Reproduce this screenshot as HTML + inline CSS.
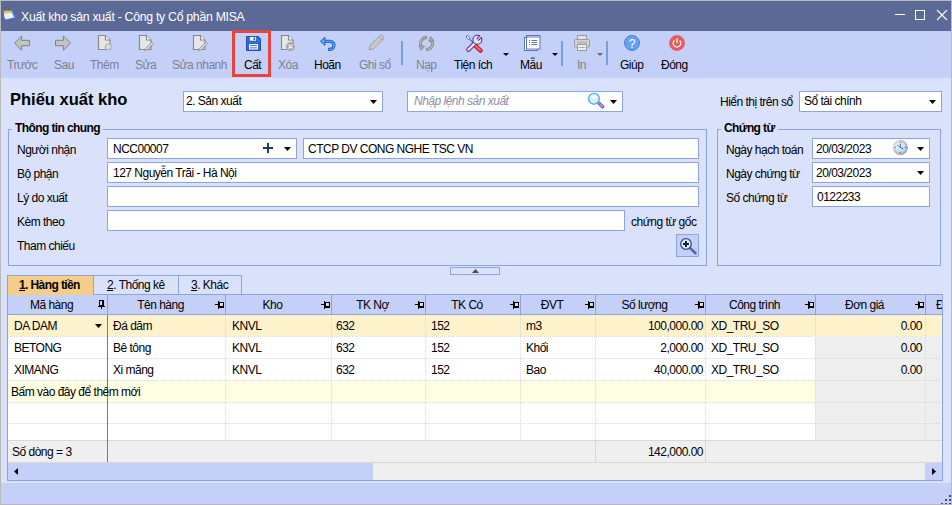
<!DOCTYPE html>
<html><head><meta charset="utf-8">
<style>
*{margin:0;padding:0;box-sizing:border-box}
html,body{width:952px;height:505px;overflow:hidden;background:#b9b9b9;font-family:"Liberation Sans",sans-serif;font-size:11px;color:#000}
.a{position:absolute}
.t{position:absolute;white-space:nowrap;line-height:11px;font-size:12px;letter-spacing:-0.5px;margin-top:1px}
.lbl{color:#000}
.dis{color:#7d8194}
.box{position:absolute;background:#fff;border:1px solid #8fa3df}
.grp{position:absolute;border:1px solid #8fa3df}
.arr{position:absolute;width:0;height:0;border-left:3.5px solid transparent;border-right:3.5px solid transparent;border-top:4px solid #000}
.sarr{position:absolute;width:0;height:0;border-left:3px solid transparent;border-right:3px solid transparent;border-top:3px solid #000}
.vs{position:absolute;width:1px;background:#8fa3df}
.dh{left:8px;width:934px;height:1px;background-image:linear-gradient(90deg,#d9d9d9 1px,transparent 1px);background-size:2px 1px}
.dv{top:315px;width:1px;height:125px;background-image:linear-gradient(180deg,#d9d9d9 1px,transparent 1px);background-size:1px 2px}
.hd{position:absolute;top:296px;height:19px;line-height:19px;text-align:center;font-size:12px;letter-spacing:-0.5px;white-space:nowrap;overflow:hidden}
</style></head><body>
<div class="a" style="left:1px;top:1px;width:950px;height:503px;background:#dae1fa"></div>
<!-- title bar -->
<div class="a" style="left:1px;top:1px;width:950px;height:30px;background:#5b6996"></div>
<svg class="a" style="left:0px;top:4px" width="18" height="20" viewBox="0 4 18 20">
 <path d="M2.4 9.8 L11.8 9.4 L15.4 17.6 L5.4 21.8 L2.6 18.2 Z" fill="#5a5fe0"/>
 <path d="M2.4 9.8 L11.8 9.4 L15.4 17.6 L14 18.2 L10.8 10.8 L3.6 11.2 Z" fill="#4aa0f0"/>
 <path d="M3.8 11.2 L10.8 10.8 L14 17.4 L5.6 19.6 L4.4 17.4 Z" fill="#eaf4ff"/>
 <path d="M3.8 11.2 L10.8 10.8 L11.8 13 L4.2 13.8 Z" fill="#f3c33c"/>
 <path d="M4.6 11.5 Q4 7.3 5.6 7.5 Q6.6 7.8 6.2 11 M8.4 11 Q8 7.2 9.6 7.3 Q10.6 7.6 10.2 10.8" stroke="#5a5a6a" stroke-width="0.8" fill="none"/>
</svg>
<div class="t" style="left:21px;top:10px;color:#fff;font-size:12.3px;letter-spacing:-0.29px;line-height:12px">Xuất kho sản xuất - Công ty Cổ phần MISA</div>
<div class="a" style="left:895px;top:14px;width:10px;height:1px;background:#fff"></div>
<div class="a" style="left:915px;top:10px;width:10px;height:10px;border:1px solid #fff"></div>
<svg class="a" style="left:936px;top:9px" width="12" height="12" viewBox="0 0 12 12"><path d="M1 1 L11 11 M11 1 L1 11" stroke="#fff" stroke-width="1.1"/></svg>

<!-- toolbar -->
<div class="a" style="left:1px;top:31px;width:950px;height:47px;background:#c4d0f7"></div>
<!-- icons -->
<svg class="a" style="left:14px;top:35px" width="17" height="17" viewBox="0 0 17 17"><path d="M0.7 8 L7.6 0.9 L7.6 5.3 L15.6 5.3 L15.6 10.7 L7.6 10.7 L7.6 15.2 Z" fill="#c3c3c3" stroke="#818181" stroke-width="1"/></svg>
<svg class="a" style="left:55px;top:35px" width="17" height="17" viewBox="0 0 17 17"><path d="M15.5 8 L8.4 0.9 L8.4 5.3 L0.5 5.3 L0.5 10.7 L8.4 10.7 L8.4 15.2 Z" fill="#c3c3c3" stroke="#818181" stroke-width="1"/></svg>
<svg class="a" style="left:97px;top:34px" width="17" height="17" viewBox="0 0 17 17"><path d="M1.5 1.5 H8.5 L13 6 V15.5 H1.5 Z" fill="#e6e6e6" stroke="#8a8a8a" stroke-width="1.2"/><path d="M8.5 1.5 V6 H13" fill="#fafafa" stroke="#8a8a8a" stroke-width="1.2"/><circle cx="11.3" cy="12.8" r="3.1" fill="#dadada" stroke="#ababab" stroke-width="1"/></svg>
<svg class="a" style="left:138px;top:34px" width="18" height="18" viewBox="0 0 18 18"><path d="M1.5 1.5 H8.5 L13 6 V15.5 H1.5 Z" fill="#e6e6e6" stroke="#8a8a8a" stroke-width="1.2"/><path d="M8.5 1.5 V6 H13" fill="#fafafa" stroke="#8a8a8a" stroke-width="1.2"/><path d="M6.8 16.8 L7.4 14.5 L13.8 8.1 L15.4 9.7 L9 16.1 Z" fill="#d8d8d8" stroke="#8c8c8c" stroke-width="0.8"/></svg>
<svg class="a" style="left:192px;top:34px" width="18" height="18" viewBox="0 0 18 18"><path d="M1.5 1.5 H8.5 L13 6 V15.5 H1.5 Z" fill="#e6e6e6" stroke="#8a8a8a" stroke-width="1.2"/><path d="M8.5 1.5 V6 H13" fill="#fafafa" stroke="#8a8a8a" stroke-width="1.2"/><path d="M6.8 16.8 L7.4 14.5 L13.8 8.1 L15.4 9.7 L9 16.1 Z" fill="#d8d8d8" stroke="#8c8c8c" stroke-width="0.8"/></svg>
<!-- save -->
<div class="a" style="left:232px;top:30px;width:39px;height:47px;border:3px solid #e8433c"></div>
<svg class="a" style="left:246px;top:36px" width="15" height="15" viewBox="0 0 15 15"><path d="M0.5 0.5 H12.3 L14.5 2.7 V14.5 H0.5 Z" fill="#2f6fd8" stroke="#1c4cb4" stroke-width="1"/><rect x="3.3" y="0.5" width="7.4" height="4.6" fill="#fff" stroke="#1c4cb4" stroke-width="0.8"/><rect x="7.4" y="1.4" width="1.8" height="2.6" fill="#2f6fd8"/><rect x="2.4" y="7.4" width="10.2" height="6.6" fill="#fff" stroke="#1c4cb4" stroke-width="0.8"/><path d="M4 9.6 H11 M4 11.9 H11" stroke="#2f6fd8" stroke-width="1"/></svg>
<svg class="a" style="left:280px;top:34px" width="17" height="17" viewBox="0 0 17 17"><path d="M1.5 1.5 H8.5 L13 6 V15.5 H1.5 Z" fill="#e6e6e6" stroke="#8a8a8a" stroke-width="1.2"/><path d="M8.5 1.5 V6 H13" fill="#fafafa" stroke="#8a8a8a" stroke-width="1.2"/><circle cx="10.4" cy="12.6" r="4.5" fill="#a9a9a9"/><path d="M8.5 10.7 L12.3 14.5 M12.3 10.7 L8.5 14.5" stroke="#f4f4f4" stroke-width="1.1"/></svg>
<svg class="a" style="left:318px;top:34px" width="18" height="18" viewBox="0 0 18 18"><path d="M6 7.3 H12 A4 4 0 0 1 12 15.3 H10" fill="none" stroke="#1f64d0" stroke-width="3.2"/><path d="M6 7.3 H12 A4 4 0 0 1 12 15.3 H10.7" fill="none" stroke="#62a8f4" stroke-width="1.3"/><path d="M2.4 7.3 L7 3.2 L7 11.4 Z" fill="#62a8f4" stroke="#1f64d0" stroke-width="1"/></svg>
<svg class="a" style="left:368px;top:34px" width="17" height="17" viewBox="0 0 17 17"><path d="M1 16 L2.5 11 L12 1.5 Q13.5 0.5 15 2 Q16.5 3.5 15.5 5 L6 14.5 Z" fill="#c9c9c9" stroke="#9a9a9a" stroke-width="0.9"/><path d="M11 3 L14 6" stroke="#9a9a9a" stroke-width="0.9"/></svg>
<div class="a" style="left:401px;top:41px;width:2px;height:24px;background:#76a0d8"></div>
<svg class="a" style="left:416px;top:32px" width="21" height="22" viewBox="0 0 21 22"><g fill="none"><path d="M10.5 5.5 A6 6 0 0 0 5.8 15.2" stroke="#8a8a8a" stroke-width="3"/><path d="M10.5 17.5 A6 6 0 0 0 15.2 7.8" stroke="#8a8a8a" stroke-width="3"/><path d="M10.5 5.5 A6 6 0 0 0 5.8 15.2" stroke="#b8b8b8" stroke-width="1.2"/><path d="M10.5 17.5 A6 6 0 0 0 15.2 7.8" stroke="#b8b8b8" stroke-width="1.2"/></g><path d="M3 13.6 L8.6 14.2 L5 18.6 Z" fill="#a8a8a8" stroke="#8a8a8a" stroke-width="0.8"/><path d="M12.6 9.4 L18 9 L14.6 4.6 Z" fill="#a8a8a8" stroke="#8a8a8a" stroke-width="0.8"/><path d="M10.5 4 V7 M10.5 16 V19" stroke="#8a8a8a" stroke-width="1"/></svg>
<svg class="a" style="left:462px;top:32px" width="24" height="22" viewBox="0 0 24 22">
 <path d="M13.2 13.6 L18.6 18.6" stroke="#b82020" stroke-width="4.4" stroke-linecap="round"/>
 <path d="M13.4 13.8 L18.4 18.4" stroke="#ea6a6a" stroke-width="2.2" stroke-linecap="round"/>
 <path d="M8 7.6 L12.6 12.2" stroke="#4a68c0" stroke-width="1.1"/>
 <ellipse cx="6.2" cy="5.6" rx="1.3" ry="2.4" transform="rotate(-45 6.2 5.6)" fill="#e6eeff" stroke="#4a68c0" stroke-width="0.9"/>
 <path d="M13.2 10.8 L6.4 17.6" stroke="#5a2c8a" stroke-width="4.4" stroke-linecap="round"/>
 <path d="M13.2 10.8 L6.4 17.6" stroke="#ebdff8" stroke-width="2.4" stroke-linecap="round"/>
 <circle cx="15.4" cy="7.8" r="4.5" fill="#ebdff8" stroke="#5a2c8a" stroke-width="1.1"/>
 <path d="M15.4 7.8 L18.6 4.6" stroke="#5a2c8a" stroke-width="3.4"/>
 <path d="M15.9 7.3 L21 2.2" stroke="#c4d0f7" stroke-width="1.4" stroke-linecap="round"/>
</svg>
<div class="sarr" style="left:503px;top:53px"></div>
<svg class="a" style="left:524px;top:35px" width="17" height="16" viewBox="0 0 17 16"><rect x="0.5" y="2.5" width="13" height="13" fill="#fff" stroke="#5a72b8"/><rect x="2.5" y="0.5" width="13.5" height="13.5" fill="#fff" stroke="#5a72b8"/><path d="M3 2 H15.5" stroke="#5a72b8" stroke-width="1"/><path d="M5 5.5 H6 M7.5 5.5 H13 M5 7.5 H6 M7.5 7.5 H13 M5 9.5 H6 M7.5 9.5 H13" stroke="#5a72b8" stroke-width="1"/></svg>
<div class="sarr" style="left:552px;top:53px"></div>
<div class="a" style="left:561px;top:41px;width:2px;height:25px;background:#76a0d8"></div>
<svg class="a" style="left:574px;top:35px" width="16" height="16" viewBox="0 0 16 16"><rect x="3.5" y="0.5" width="9" height="7" fill="#e2e2e2" stroke="#9c9c9c"/><rect x="0.5" y="4.5" width="15" height="7.5" rx="1" fill="#d2d2d2" stroke="#9c9c9c"/><rect x="3" y="6.5" width="10" height="2" fill="#b8b8b8"/><rect x="3.5" y="9.5" width="9" height="6" fill="#eeeeee" stroke="#9c9c9c"/><path d="M5 12.5 H11" stroke="#aaa"/></svg>
<div class="sarr" style="left:597px;top:53px;border-top-color:#6a6a6a"></div>
<div class="a" style="left:606px;top:41px;width:2px;height:24px;background:#76a0d8"></div>
<svg class="a" style="left:624px;top:35px" width="16" height="16" viewBox="0 0 16 16"><circle cx="8" cy="8" r="7.5" fill="#62a4f2" stroke="#3b7bd8" stroke-width="0.9"/><text x="8" y="12.5" font-family="Liberation Sans" font-size="12" fill="#fff" text-anchor="middle">?</text></svg>
<svg class="a" style="left:669px;top:35px" width="16" height="16" viewBox="0 0 16 16"><circle cx="8" cy="8" r="7.5" fill="#ea5c5c" stroke="#d44" stroke-width="0.6"/><path d="M5.3 5.5 A3.8 3.8 0 1 0 10.7 5.5" fill="none" stroke="#fff" stroke-width="1.3"/><path d="M8 3.5 V8" stroke="#fff" stroke-width="1.3"/></svg>
<!-- toolbar labels -->
<div class="t dis" style="left:7px;top:59px">Trước</div>
<div class="t dis" style="left:54px;top:59px">Sau</div>
<div class="t dis" style="left:90px;top:59px">Thêm</div>
<div class="t dis" style="left:135px;top:59px">Sửa</div>
<div class="t dis" style="left:172px;top:59px">Sửa nhanh</div>
<div class="t" style="left:244px;top:59px">Cất</div>
<div class="t dis" style="left:278px;top:59px">Xóa</div>
<div class="t" style="left:314px;top:59px">Hoãn</div>
<div class="t dis" style="left:359px;top:59px">Ghi sổ</div>
<div class="t dis" style="left:416px;top:59px">Nạp</div>
<div class="t" style="left:454px;top:59px">Tiện ích</div>
<div class="t" style="left:520px;top:59px">Mẫu</div>
<div class="t dis" style="left:577px;top:59px">In</div>
<div class="t" style="left:620px;top:59px">Giúp</div>
<div class="t" style="left:661px;top:59px">Đóng</div>

<!-- header row of form -->
<div class="t" style="left:10px;top:90px;font-size:16.5px;line-height:16px;font-weight:bold;letter-spacing:0">Phiếu xuất kho</div>
<div class="box" style="left:183px;top:91px;width:200px;height:21px"></div>
<div class="t" style="left:186px;top:95px">2. Sản xuất</div>
<svg class="a" style="left:370px;top:100px" width="7" height="4"><path d="M0 0H7L3.5 4Z"/></svg>
<div class="box" style="left:407px;top:91px;width:216px;height:21px"></div>
<div class="t" style="left:414px;top:95px;font-style:italic;color:#8a8fa6">Nhập lệnh sản xuất</div>
<svg class="a" style="left:588px;top:92px" width="17" height="17" viewBox="0 0 17 17"><path d="M11 11.2 L14.6 14.8" stroke="#6f62d2" stroke-width="3.4" stroke-linecap="round"/><path d="M11.2 11.4 L14.4 14.6" stroke="#b4a8ee" stroke-width="1.3" stroke-linecap="round"/><circle cx="6" cy="6.8" r="5.4" fill="#d6eefa" stroke="#62abe8" stroke-width="1.4"/><ellipse cx="6" cy="5" rx="3.5" ry="1.8" fill="#f2fbff"/></svg>
<svg class="a" style="left:610px;top:100px" width="7" height="4"><path d="M0 0H7L3.5 4Z"/></svg>
<div class="t" style="left:720px;top:96px">Hiển thị trên sổ</div>
<div class="box" style="left:799px;top:91px;width:143px;height:21px"></div>
<div class="t" style="left:804px;top:95px">Sổ tài chính</div>
<svg class="a" style="left:929px;top:100px" width="7" height="4"><path d="M0 0H7L3.5 4Z"/></svg>

<!-- group 1 -->
<div class="grp" style="left:8px;top:129px;width:699px;height:137px"></div>
<div class="t" style="left:12px;top:122px;padding:0 3px;background:#dae1fa;font-weight:bold;letter-spacing:-0.6px">Thông tin chung</div>
<div class="t" style="left:17px;top:144px">Người nhận</div>
<div class="t" style="left:17px;top:168px">Bộ phận</div>
<div class="t" style="left:17px;top:192px">Lý do xuất</div>
<div class="t" style="left:17px;top:216px">Kèm theo</div>
<div class="t" style="left:17px;top:240px">Tham chiếu</div>
<div class="box" style="left:107px;top:138px;width:190px;height:21px"></div>
<div class="t" style="left:113px;top:143px">NCC00007</div>
<svg class="a" style="left:263px;top:143px" width="11" height="11" viewBox="0 0 11 11"><path d="M5 0 V10 M0 5 H10" stroke="#273766" stroke-width="2"/></svg>
<svg class="a" style="left:284px;top:147px" width="7" height="4"><path d="M0 0H7L3.5 4Z"/></svg>
<div class="box" style="left:303px;top:138px;width:396px;height:21px"></div>
<div class="t" style="left:308px;top:143px">CTCP DV CONG NGHE TSC VN</div>
<div class="box" style="left:107px;top:162px;width:592px;height:21px"></div>
<div class="t" style="left:113px;top:167px">127 Nguyễn Trãi - Hà Nội</div>
<div class="box" style="left:107px;top:186px;width:592px;height:21px"></div>
<div class="box" style="left:107px;top:210px;width:518px;height:21px"></div>
<div class="t" style="left:631px;top:216px">chứng từ gốc</div>
<div class="a" style="left:676px;top:234px;width:23px;height:23px;background:#c4d0f7;border:1px solid #8fa3df"></div>
<svg class="a" style="left:678px;top:236px" width="20" height="20" viewBox="0 0 20 20"><path d="M11.8 11.8 L17.5 17.3" stroke="#5868a8" stroke-width="2.6" stroke-linecap="round"/><circle cx="8" cy="8" r="5.3" fill="#d9f1ff" stroke="#3d4a86" stroke-width="1.3"/><path d="M8 5 V11 M5 8 H11" stroke="#1e2436" stroke-width="2"/></svg>

<!-- group 2 -->
<div class="grp" style="left:717px;top:129px;width:224px;height:137px"></div>
<div class="t" style="left:721px;top:122px;padding:0 3px;background:#dae1fa;font-weight:bold;letter-spacing:-0.6px">Chứng từ</div>
<div class="t" style="left:726px;top:144px">Ngày hạch toán</div>
<div class="t" style="left:726px;top:168px">Ngày chứng từ</div>
<div class="t" style="left:726px;top:192px">Số chứng từ</div>
<div class="box" style="left:812px;top:138px;width:118px;height:21px"></div>
<div class="t" style="left:816px;top:143px">20/03/2023</div>
<svg class="a" style="left:892px;top:139px" width="17" height="17" viewBox="0 0 17 17"><defs><linearGradient id="rim" x1="0" y1="0" x2="1" y2="1"><stop offset="0" stop-color="#e8e8e8"/><stop offset="1" stop-color="#8c8c8c"/></linearGradient><radialGradient id="face" cx="0.4" cy="0.35" r="0.7"><stop offset="0" stop-color="#f2fbff"/><stop offset="1" stop-color="#9fd0f0"/></radialGradient></defs><circle cx="8.3" cy="8.4" r="7.6" fill="url(#rim)"/><circle cx="8.3" cy="8.4" r="6" fill="url(#face)"/><g fill="#e04040"><circle cx="8.3" cy="3.4" r="0.6"/><circle cx="13.3" cy="8.4" r="0.6"/><circle cx="8.3" cy="13.4" r="0.6"/><circle cx="3.3" cy="8.4" r="0.6"/></g><path d="M8.3 4.8 V8.4 L11.2 9.8" stroke="#3a4a6a" stroke-width="0.9" fill="none"/><path d="M5 6 L8.3 8.4" stroke="#3a4a6a" stroke-width="0.7"/></svg>
<svg class="a" style="left:917px;top:147px" width="7" height="4"><path d="M0 0H7L3.5 4Z"/></svg>
<div class="box" style="left:812px;top:162px;width:118px;height:21px"></div>
<div class="t" style="left:816px;top:167px">20/03/2023</div>
<svg class="a" style="left:917px;top:171px" width="7" height="4"><path d="M0 0H7L3.5 4Z"/></svg>
<div class="box" style="left:812px;top:186px;width:118px;height:21px"></div>
<div class="t" style="left:817px;top:191px">0122233</div>

<!-- splitter -->
<div class="a" style="left:450px;top:267px;width:50px;height:8px;border:1px solid #8fa3df"></div>
<svg class="a" style="left:472px;top:269px" width="7" height="4"><path d="M0 4H7L3.5 0Z" fill="#4a4a4a"/></svg>

<!-- tabs -->

<div class="a" style="left:93px;top:275px;width:86px;height:20px;border:1px solid #8fa3df;border-bottom:none"></div>
<div class="a" style="left:178px;top:275px;width:64px;height:20px;border:1px solid #8fa3df;border-bottom:none"></div>
<div class="a" style="left:7px;top:275px;width:86px;height:20px;background:#f5cd8b;border-top:1px solid #8fa3df;border-left:1px solid #8fa3df;z-index:2"></div>
<div class="t" style="left:19px;top:279px;font-weight:bold;letter-spacing:-0.6px;z-index:3"><u>1</u>. Hàng tiền</div>
<div class="t" style="left:107px;top:279px"><u>2</u>. Thống kê</div>
<div class="t" style="left:191px;top:279px"><u>3</u>. Khác</div>

<!-- grid -->
<div class="a" style="left:7px;top:294px;width:936px;height:187px;border:1px solid #8fa3df;background:#fff"></div>
<div class="a" style="left:8px;top:295px;width:934px;height:19px;background:#c4d0f7"></div>
<div class="a" style="left:8px;top:314px;width:934px;height:1px;background:#8fa3df"></div>
<!-- grid body -->
<div class="a" style="left:8px;top:315px;width:934px;height:21px;background:#fdf2cc"></div>
<div class="a" style="left:8px;top:381px;width:807px;height:21px;background:#fefee3"></div>
<div class="a" style="left:815px;top:337px;width:127px;height:103px;background:#efefef"></div>
<div class="a dh" style="top:336px"></div>
<div class="a dh" style="top:358px"></div>
<div class="a dh" style="top:380px"></div>
<div class="a dh" style="top:402px"></div>
<div class="a dh" style="top:423px"></div>
<div class="a dv" style="left:225px"></div>
<div class="a dv" style="left:331px"></div>
<div class="a dv" style="left:425px"></div>
<div class="a dv" style="left:520px"></div>
<div class="a dv" style="left:595px"></div>
<div class="a dv" style="left:705px"></div>
<div class="a dv" style="left:815px"></div>
<div class="a dv" style="left:925px"></div>
<div class="a" style="left:107px;top:315px;width:1px;height:147px;background:#7c7c7c"></div>
<div class="vs" style="left:107px;top:295px;height:19px"></div>
<div class="vs" style="left:225px;top:295px;height:19px"></div>
<div class="vs" style="left:331px;top:295px;height:19px"></div>
<div class="vs" style="left:425px;top:295px;height:19px"></div>
<div class="vs" style="left:520px;top:295px;height:19px"></div>
<div class="vs" style="left:595px;top:295px;height:19px"></div>
<div class="vs" style="left:705px;top:295px;height:19px"></div>
<div class="vs" style="left:815px;top:295px;height:19px"></div>
<div class="vs" style="left:925px;top:295px;height:19px"></div>
<div class="hd" style="left:8px;width:87px">Mã hàng</div>
<div class="hd" style="left:108px;width:105px">Tên hàng</div>
<div class="hd" style="left:226px;width:93px">Kho</div>
<div class="hd" style="left:332px;width:81px">TK Nợ</div>
<div class="hd" style="left:426px;width:82px">TK Có</div>
<div class="hd" style="left:521px;width:62px">ĐVT</div>
<div class="hd" style="left:596px;width:97px">Số lượng</div>
<div class="hd" style="left:706px;width:97px">Công trình</div>
<div class="hd" style="left:816px;width:97px">Đơn giá</div>
<div class="hd" style="left:936px;width:6px;text-align:left">Đơn giá</div>
<svg class="a" style="left:98px;top:300px" width="7" height="9" shape-rendering="crispEdges"><path d="M1 0h5v6h-5z M0 6h7v1h-7z M3 7h1v2h-1z" fill="#000"/><rect x="2" y="1" width="2" height="4" fill="#dedede"/></svg>
<svg class="a" style="left:215px;top:301px" width="9" height="8" shape-rendering="crispEdges"><path d="M0 3h3v1h-3z M3 0h1v8h-1z M4 1h5v6h-5z" fill="#000"/><rect x="5" y="2" width="3" height="3" fill="#dedede"/></svg>
<svg class="a" style="left:321px;top:301px" width="9" height="8" shape-rendering="crispEdges"><path d="M0 3h3v1h-3z M3 0h1v8h-1z M4 1h5v6h-5z" fill="#000"/><rect x="5" y="2" width="3" height="3" fill="#dedede"/></svg>
<svg class="a" style="left:415px;top:301px" width="9" height="8" shape-rendering="crispEdges"><path d="M0 3h3v1h-3z M3 0h1v8h-1z M4 1h5v6h-5z" fill="#000"/><rect x="5" y="2" width="3" height="3" fill="#dedede"/></svg>
<svg class="a" style="left:510px;top:301px" width="9" height="8" shape-rendering="crispEdges"><path d="M0 3h3v1h-3z M3 0h1v8h-1z M4 1h5v6h-5z" fill="#000"/><rect x="5" y="2" width="3" height="3" fill="#dedede"/></svg>
<svg class="a" style="left:585px;top:301px" width="9" height="8" shape-rendering="crispEdges"><path d="M0 3h3v1h-3z M3 0h1v8h-1z M4 1h5v6h-5z" fill="#000"/><rect x="5" y="2" width="3" height="3" fill="#dedede"/></svg>
<svg class="a" style="left:695px;top:301px" width="9" height="8" shape-rendering="crispEdges"><path d="M0 3h3v1h-3z M3 0h1v8h-1z M4 1h5v6h-5z" fill="#000"/><rect x="5" y="2" width="3" height="3" fill="#dedede"/></svg>
<svg class="a" style="left:805px;top:301px" width="9" height="8" shape-rendering="crispEdges"><path d="M0 3h3v1h-3z M3 0h1v8h-1z M4 1h5v6h-5z" fill="#000"/><rect x="5" y="2" width="3" height="3" fill="#dedede"/></svg>
<svg class="a" style="left:915px;top:301px" width="9" height="8" shape-rendering="crispEdges"><path d="M0 3h3v1h-3z M3 0h1v8h-1z M4 1h5v6h-5z" fill="#000"/><rect x="5" y="2" width="3" height="3" fill="#dedede"/></svg>
<div class="t" style="left:14px;top:320px">DA DAM</div>
<div class="t" style="left:113px;top:320px">Đá dăm</div>
<div class="t" style="left:232px;top:320px">KNVL</div>
<div class="t" style="left:336px;top:320px">632</div>
<div class="t" style="left:431px;top:320px">152</div>
<div class="t" style="left:526px;top:320px">m3</div>
<div class="t" style="right:249px;top:320px">100,000.00</div>
<div class="t" style="left:711px;top:320px">XD_TRU_SO</div>
<div class="t" style="right:30px;top:320px">0.00</div>
<div class="t" style="left:14px;top:342px">BETONG</div>
<div class="t" style="left:113px;top:342px">Bê tông</div>
<div class="t" style="left:232px;top:342px">KNVL</div>
<div class="t" style="left:336px;top:342px">632</div>
<div class="t" style="left:431px;top:342px">152</div>
<div class="t" style="left:526px;top:342px">Khối</div>
<div class="t" style="right:249px;top:342px">2,000.00</div>
<div class="t" style="left:711px;top:342px">XD_TRU_SO</div>
<div class="t" style="right:30px;top:342px">0.00</div>
<div class="t" style="left:14px;top:364px">XIMANG</div>
<div class="t" style="left:113px;top:364px">Xi măng</div>
<div class="t" style="left:232px;top:364px">KNVL</div>
<div class="t" style="left:336px;top:364px">632</div>
<div class="t" style="left:431px;top:364px">152</div>
<div class="t" style="left:526px;top:364px">Bao</div>
<div class="t" style="right:249px;top:364px">40,000.00</div>
<div class="t" style="left:711px;top:364px">XD_TRU_SO</div>
<div class="t" style="right:30px;top:364px">0.00</div>
<svg class="a" style="left:95px;top:324px" width="7" height="4"><path d="M0 0H7L3.5 4Z"/></svg>
<div class="t" style="left:11px;top:386px">Bấm vào đây để thêm mới</div>
<div class="a" style="left:8px;top:440px;width:934px;height:1px;background:#d8d8d8"></div>
<div class="a" style="left:8px;top:441px;width:934px;height:21px;background:#efefef"></div>
<div class="a" style="left:107px;top:440px;width:1px;height:22px;background:#7c7c7c"></div>
<div class="a" style="left:705px;top:441px;width:1px;height:21px;background:#d8d8d8"></div>
<div class="t" style="left:12px;top:446px">Số dòng = 3</div>
<div class="a" style="left:595px;top:441px;width:1px;height:21px;background:#d8d8d8"></div>
<div class="t" style="right:249px;top:446px">142,000.00</div>
<div class="a" style="left:8px;top:462px;width:934px;height:1px;background:#d8d8d8"></div>
<div class="a" style="left:8px;top:463px;width:934px;height:17px;background:#efefef"></div>
<div class="a" style="left:8px;top:463px;width:365px;height:17px;background:#c4d0f7"></div>
<div class="a" style="left:925px;top:463px;width:17px;height:17px;background:#c4d0f7"></div>
<svg class="a" style="left:14px;top:468px" width="4" height="7"><path d="M4 0V7L0 3.5Z"/></svg>
<svg class="a" style="left:932px;top:468px" width="4" height="7"><path d="M0 0V7L4 3.5Z"/></svg>
<div class="a" style="left:1px;top:483px;width:950px;height:21px;background:#c4d0f7"></div>
<div class="a" style="left:7px;top:480px;width:936px;height:1px;background:#8fa3df"></div>
<svg class="a" style="left:941px;top:495px" width="10" height="9" viewBox="0 0 10 9"><g fill="#3c4b6e"><rect x="8" y="0" width="2" height="2"/><rect x="4" y="4" width="2" height="2"/><rect x="8" y="4" width="2" height="2"/><rect x="0" y="8" width="2" height="1"/><rect x="4" y="8" width="2" height="1"/><rect x="8" y="8" width="2" height="1"/></g></svg>
</body></html>
